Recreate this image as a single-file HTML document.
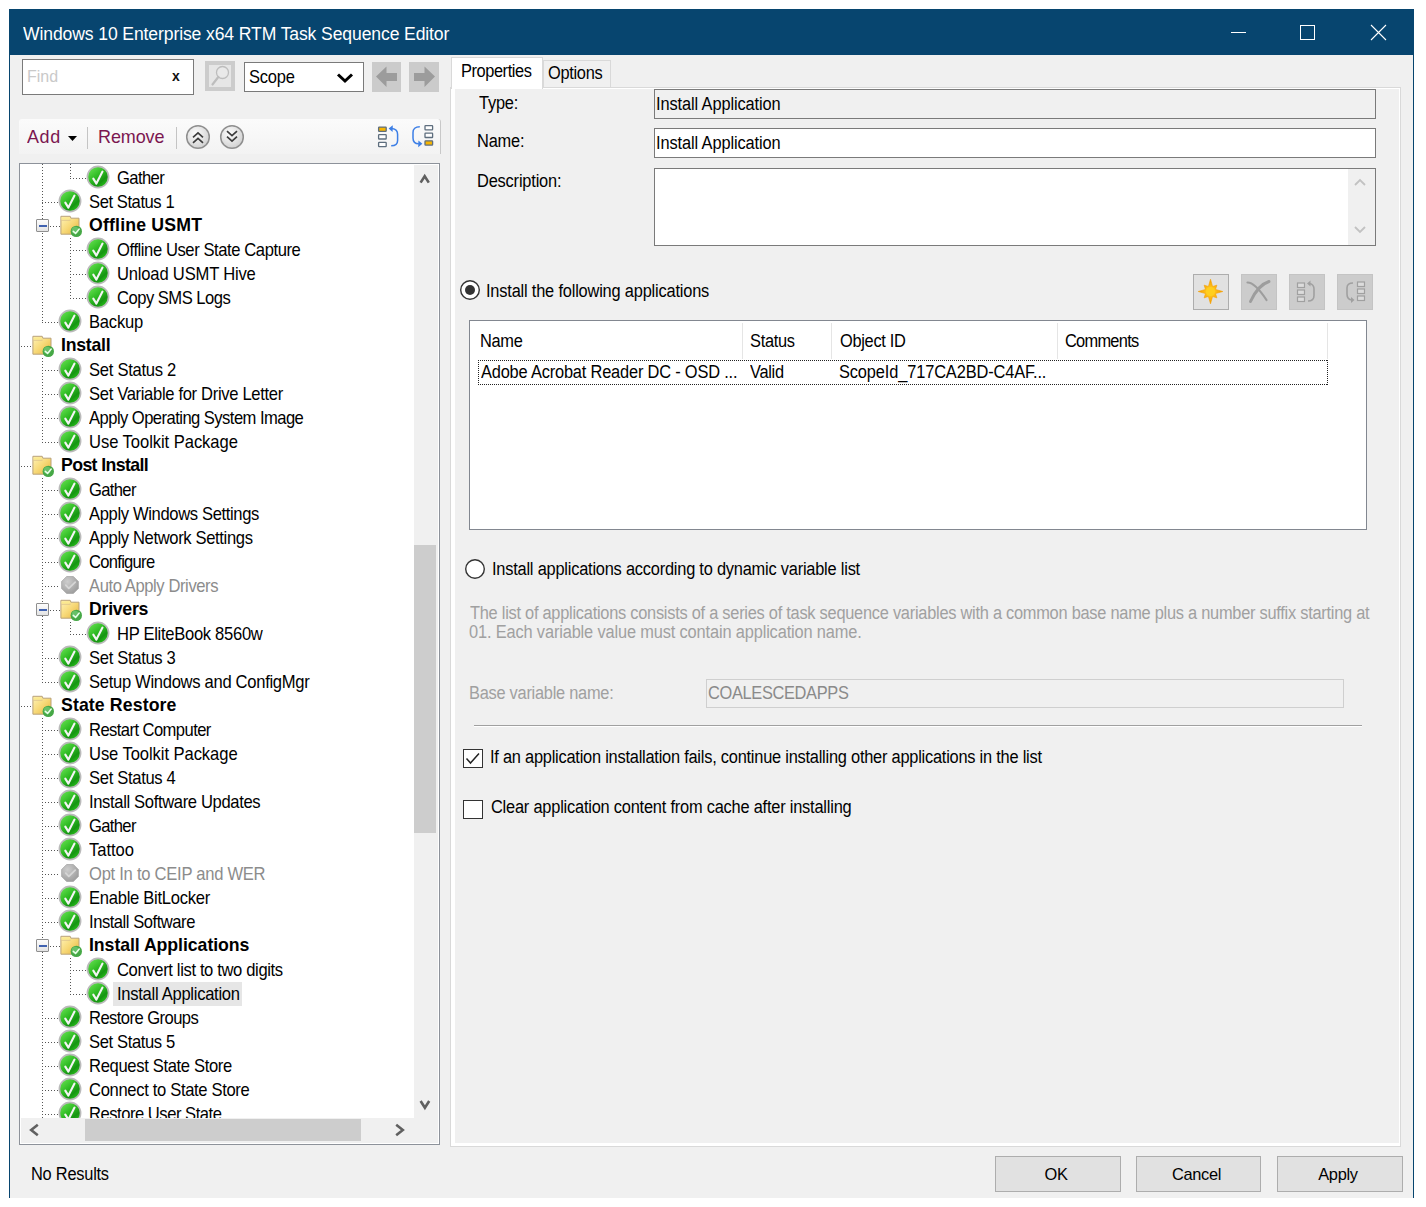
<!DOCTYPE html>
<html><head><meta charset="utf-8"><title>Task Sequence Editor</title>
<style>
html,body{margin:0;padding:0;}
body{width:1426px;height:1207px;position:relative;overflow:hidden;background:#fff;font-family:"Liberation Sans",sans-serif;}
.r{position:absolute;}
.t{position:absolute;white-space:nowrap;}
svg.r{overflow:visible;}
</style></head><body>
<svg width="0" height="0" style="position:absolute">
<defs>
<linearGradient id="gg" x1="0.15" y1="0.1" x2="0.85" y2="0.95">
<stop offset="0" stop-color="#60de4c"/><stop offset="0.45" stop-color="#2bb820"/><stop offset="0.72" stop-color="#169412"/><stop offset="1" stop-color="#2ccc1c"/>
</linearGradient>
<radialGradient id="gd" cx="35%" cy="30%" r="75%">
<stop offset="0" stop-color="#cdcdcd"/><stop offset="1" stop-color="#9d9d9d"/>
</radialGradient>
<linearGradient id="fy" x1="0" y1="0" x2="1" y2="1">
<stop offset="0" stop-color="#fff3b8"/><stop offset="0.5" stop-color="#f7d978"/><stop offset="1" stop-color="#e7b33c"/>
</linearGradient>
<symbol id="chk" viewBox="0 0 24 24">
<circle cx="12" cy="12" r="10.6" fill="url(#gg)" stroke="#bababa" stroke-width="1.7"/>
<path d="M7.3 13.6 L10.4 18.6 L16.5 6.6" fill="none" stroke="#f4f4f4" stroke-width="2.1" stroke-linecap="round" stroke-linejoin="round"/>
</symbol>
<symbol id="chkd" viewBox="0 0 24 24">
<path d="M8.6 3.5 H15.4 L20.4 8.5 V15.5 L15.4 20.5 H8.6 L3.6 15.5 V8.5 Z" fill="url(#gd)" stroke="#a9a9a9" stroke-width="0.8" stroke-linejoin="round"/>
<path d="M7.8 12.2 L10.8 15.4 L17.2 9.2" fill="none" stroke="#d6d6d6" stroke-width="1.8" stroke-linecap="round" stroke-linejoin="round"/>
</symbol>
<symbol id="fld" viewBox="0 0 24 24">
<path d="M0.9 1.3 H10.2 L10.9 3.2 H19 V19.2 H0.9 Z" fill="url(#fy)" stroke="#b9a27a" stroke-width="1"/>
<path d="M1.4 5.2 H10.5" stroke="#d9c089" stroke-width="0.9"/>
<path d="M1.5 2.5 H9.5 V4.6 H1.5 Z" fill="#fbe98e"/>
<circle cx="16.3" cy="16.4" r="5.7" fill="#46a846"/>
<circle cx="15.2" cy="15.2" r="3.5" fill="#7fd07f" opacity="0.6"/>
<path d="M13.3 16.4 L15.6 18.4 L19.2 14" fill="none" stroke="#eaffea" stroke-width="1.5" stroke-linecap="round"/>
</symbol>
</defs></svg>
<div class="r" style="left:9px;top:9px;width:1405px;height:1189px;background:#f0f0f0;"></div>
<div class="r" style="left:9px;top:9px;width:1405px;height:46px;background:#07456f;"></div>
<div class="r" style="left:9px;top:55px;width:1px;height:1143px;background:#07456f;"></div>
<div class="r" style="left:1413px;top:55px;width:1px;height:1143px;background:#07456f;"></div>
<div class="t" style="left:22.5px;top:21.52px;font-size:18.13px;line-height:25px;color:#fff;letter-spacing:-0.124px;transform:scaleX(0.9709);transform-origin:0 0;">Windows 10 Enterprise x64 RTM Task Sequence Editor</div>
<div class="r" style="left:1231px;top:32px;width:15px;height:1px;background:#fff;"></div>
<div class="r" style="left:1300px;top:25px;width:15px;height:15px;border:1px solid #fff;box-sizing:border-box;"></div>
<svg class="r" style="left:1370px;top:24px" width="17" height="17"><path d="M1 1L16 16M16 1L1 16" stroke="#fff" stroke-width="1.1"/></svg>
<div class="r" style="left:22px;top:59px;width:172px;height:36px;background:#fff;border:1px solid #7a7a7a;box-sizing:border-box;"></div>
<div class="t" style="left:27px;top:64.57px;font-size:17.12px;line-height:24px;color:#c9c9c9;transform:scaleX(0.9346);transform-origin:0 0;">Find</div>
<div class="t" style="left:172px;top:64.81px;font-size:14.98px;line-height:21px;color:#111;font-weight:bold;transform:scaleX(0.9346);transform-origin:0 0;">x</div>
<div class="r" style="left:205px;top:61px;width:30px;height:30px;background:#cccccc;"></div>
<div class="r" style="left:209px;top:65px;width:22px;height:22px;background:#e6e6e6;"></div>
<svg class="r" style="left:205px;top:61px" width="30" height="30"><circle cx="17.5" cy="11.5" r="6" fill="#e9e9e9" stroke="#bdbdbd" stroke-width="1.3"/><path d="M13.3 16 L7.5 23.5" stroke="#bdbdbd" stroke-width="2.2" stroke-linecap="round"/></svg>
<div class="r" style="left:244px;top:62px;width:120px;height:30px;background:#fff;border:1px solid #7a7a7a;box-sizing:border-box;"></div>
<div class="t" style="left:249px;top:65.38px;font-size:17.66px;line-height:25px;color:#000;letter-spacing:-0.214px;transform:scaleX(0.9346);transform-origin:0 0;">Scope</div>
<svg class="r" style="left:336px;top:72px" width="19" height="12"><path d="M2 2.5 L9 9 L16 2.5" fill="none" stroke="#000" stroke-width="3"/></svg>
<div class="r" style="left:372px;top:62px;width:29px;height:30px;background:#cbcbcb;"></div>
<div class="r" style="left:409px;top:62px;width:30px;height:30px;background:#cbcbcb;"></div>
<svg class="r" style="left:372px;top:62px" width="30" height="30"><path d="M4 14.5 L14.5 4.5 V11 H25 V19 H14.5 V25 Z" fill="#9c9c9c"/></svg>
<svg class="r" style="left:409px;top:62px" width="30" height="30"><path d="M26 14.5 L15.5 4.5 V11 H5 V19 H15.5 V25 Z" fill="#9c9c9c"/></svg>
<div class="r" style="left:19px;top:119px;width:422px;height:35px;background:linear-gradient(#fbfbfb,#f3f3f3);border-right:1px solid #c8c8c8;box-sizing:border-box;border-radius:3px 3px 0 0;"></div>
<div class="t" style="left:26.8px;top:123.13px;font-size:19.26px;line-height:27px;color:#7b1650;letter-spacing:0.642px;transform:scaleX(0.9346);transform-origin:0 0;">Add</div>
<svg class="r" style="left:67.5px;top:135.5px" width="10" height="6"><path d="M0 0 H9 L4.5 5 Z" fill="#000"/></svg>
<div class="r" style="left:87px;top:127px;width:1px;height:22px;background:#c4c4c4;"></div>
<div class="t" style="left:98.4px;top:123.13px;font-size:19.26px;line-height:27px;color:#7b1650;letter-spacing:-0.107px;transform:scaleX(0.9346);transform-origin:0 0;">Remove</div>
<div class="r" style="left:176px;top:127px;width:1px;height:22px;background:#c4c4c4;"></div>
<svg class="r" style="left:184.6px;top:124px" width="26" height="26"><defs><radialGradient id="cb197" cx="40%" cy="35%" r="70%"><stop offset="0" stop-color="#fdfdfd"/><stop offset="1" stop-color="#cfcfcf"/></radialGradient></defs><circle cx="13" cy="13" r="11.3" fill="url(#cb197)" stroke="#8f8f8f" stroke-width="1.5"/><g transform="translate(13 11.5)"><path d="M-5 1.8 L0 -2.6 L5 1.8 M-5 7.3 L0 2.9 L5 7.3" fill="none" stroke="#3c3c3c" stroke-width="1.7"/></g></svg>
<svg class="r" style="left:219px;top:124px" width="26" height="26"><defs><radialGradient id="cb232" cx="40%" cy="35%" r="70%"><stop offset="0" stop-color="#fdfdfd"/><stop offset="1" stop-color="#cfcfcf"/></radialGradient></defs><circle cx="13" cy="13" r="11.3" fill="url(#cb232)" stroke="#8f8f8f" stroke-width="1.5"/><g transform="translate(13 14.5)"><path d="M-5 -7.3 L0 -2.9 L5 -7.3 M-5 -1.8 L0 2.6 L5 -1.8" fill="none" stroke="#3c3c3c" stroke-width="1.7"/></g></svg>
<svg class="r" style="left:376px;top:124px" width="26" height="26">
<rect x="2.6" y="3.1" width="7.6" height="4.3" fill="#f7b500" stroke="#5e6e7e" stroke-width="1.3" rx="0.6"/>
<rect x="2.6" y="10.7" width="7.6" height="4.3" fill="#fff" stroke="#5e6e7e" stroke-width="1.3" rx="0.6"/>
<rect x="2.6" y="18.3" width="7.6" height="4.3" fill="#fff" stroke="#5e6e7e" stroke-width="1.3" rx="0.6"/>
<path d="M15.2 21.8 Q21.6 21.8 21.6 16.5 V10.5 Q21.6 5.2 16 4.6" fill="none" stroke="#3d7fe6" stroke-width="1.5"/>
<path d="M12.6 4.4 L16.8 1.2 L16.6 8 Z" fill="#3d7fe6"/>
</svg>
<svg class="r" style="left:410px;top:124px" width="26" height="26">
<rect x="15" y="1.6" width="7.6" height="4.3" fill="#fff" stroke="#5e6e7e" stroke-width="1.3" rx="0.6"/>
<rect x="15" y="9.2" width="7.6" height="4.3" fill="#fff" stroke="#5e6e7e" stroke-width="1.3" rx="0.6"/>
<rect x="15" y="16.8" width="7.6" height="4.3" fill="#f7b500" stroke="#5e6e7e" stroke-width="1.3" rx="0.6"/>
<path d="M9.8 2.8 Q3 2.8 3 8.5 V14 Q3 19.8 8.8 19.8" fill="none" stroke="#3d7fe6" stroke-width="1.5"/>
<path d="M12.4 19.8 L8.2 23.2 L8.4 16.4 Z" fill="#3d7fe6"/>
</svg>
<div class="r" style="left:19px;top:163px;width:421px;height:982px;background:#fff;border:1px solid #8d929a;box-sizing:border-box;"></div>
<div class="r" style="left:20px;top:164px;width:394px;height:954px;overflow:hidden;">
<div class="r" style="left:-20px;top:-164px;width:1426px;height:1300px;">
<div class="r" style="left:41.5px;top:164px;width:1px;height:158.5px;background:repeating-linear-gradient(180deg,#555555 0 1px,transparent 1px 3px);"></div>
<div class="r" style="left:41.5px;top:357.5px;width:1px;height:85.0px;background:repeating-linear-gradient(180deg,#555555 0 1px,transparent 1px 3px);"></div>
<div class="r" style="left:41.5px;top:477.5px;width:1px;height:205.0px;background:repeating-linear-gradient(180deg,#555555 0 1px,transparent 1px 3px);"></div>
<div class="r" style="left:41.5px;top:717.5px;width:1px;height:400.5px;background:repeating-linear-gradient(180deg,#555555 0 1px,transparent 1px 3px);"></div>
<div class="r" style="left:69.5px;top:164px;width:1px;height:14.5px;background:repeating-linear-gradient(180deg,#555555 0 1px,transparent 1px 3px);"></div>
<div class="r" style="left:69.5px;top:237.5px;width:1px;height:61.0px;background:repeating-linear-gradient(180deg,#555555 0 1px,transparent 1px 3px);"></div>
<div class="r" style="left:69.5px;top:621.5px;width:1px;height:13.0px;background:repeating-linear-gradient(180deg,#555555 0 1px,transparent 1px 3px);"></div>
<div class="r" style="left:69.5px;top:957.5px;width:1px;height:37.0px;background:repeating-linear-gradient(180deg,#555555 0 1px,transparent 1px 3px);"></div>
<div class="r" style="left:70px;top:178px;width:17.5px;height:1px;background:repeating-linear-gradient(90deg,#555555 0 1px,transparent 1px 3px);"></div>
<svg class="r" style="left:85.5px;top:165.0px" width="24" height="24"><use href="#chk"/></svg>
<div class="t" style="left:116.5px;top:166.05px;font-size:17.76px;line-height:25px;color:#000;letter-spacing:-0.631px;transform:scaleX(0.9346);transform-origin:0 0;">Gather</div>
<div class="r" style="left:42px;top:202px;width:17.5px;height:1px;background:repeating-linear-gradient(90deg,#555555 0 1px,transparent 1px 3px);"></div>
<svg class="r" style="left:57.5px;top:189.0px" width="24" height="24"><use href="#chk"/></svg>
<div class="t" style="left:88.5px;top:190.05px;font-size:17.76px;line-height:25px;color:#000;letter-spacing:-0.462px;transform:scaleX(0.9346);transform-origin:0 0;">Set Status 1</div>
<div class="r" style="left:50px;top:226px;width:10.5px;height:1px;background:repeating-linear-gradient(90deg,#555555 0 1px,transparent 1px 3px);"></div>
<svg class="r" style="left:59.5px;top:214.5px" width="24" height="24"><use href="#fld"/></svg>
<div class="r" style="left:36px;top:219.0px;width:13px;height:13.0px;background:linear-gradient(#fdfdfd,#e3e3e3);border:1px solid #8f8f8f;box-sizing:border-box;border-radius:1px;"></div>
<div class="r" style="left:38.5px;top:224.5px;width:8.0px;height:2.0px;background:#4062b0;"></div>
<div class="t" style="left:88.5px;top:211.34px;font-size:18.94px;line-height:27px;color:#000;font-weight:bold;letter-spacing:0.185px;transform:scaleX(0.9346);transform-origin:0 0;">Offline USMT</div>
<div class="r" style="left:70px;top:250px;width:17.5px;height:1px;background:repeating-linear-gradient(90deg,#555555 0 1px,transparent 1px 3px);"></div>
<svg class="r" style="left:85.5px;top:237.0px" width="24" height="24"><use href="#chk"/></svg>
<div class="t" style="left:116.5px;top:238.05px;font-size:17.76px;line-height:25px;color:#000;letter-spacing:-0.447px;transform:scaleX(0.9346);transform-origin:0 0;">Offline User State Capture</div>
<div class="r" style="left:70px;top:274px;width:17.5px;height:1px;background:repeating-linear-gradient(90deg,#555555 0 1px,transparent 1px 3px);"></div>
<svg class="r" style="left:85.5px;top:261.0px" width="24" height="24"><use href="#chk"/></svg>
<div class="t" style="left:116.5px;top:262.05px;font-size:17.76px;line-height:25px;color:#000;letter-spacing:-0.203px;transform:scaleX(0.9346);transform-origin:0 0;">Unload USMT Hive</div>
<div class="r" style="left:70px;top:298px;width:17.5px;height:1px;background:repeating-linear-gradient(90deg,#555555 0 1px,transparent 1px 3px);"></div>
<svg class="r" style="left:85.5px;top:285.0px" width="24" height="24"><use href="#chk"/></svg>
<div class="t" style="left:116.5px;top:286.05px;font-size:17.76px;line-height:25px;color:#000;letter-spacing:-0.544px;transform:scaleX(0.9346);transform-origin:0 0;">Copy SMS Logs</div>
<div class="r" style="left:42px;top:322px;width:17.5px;height:1px;background:repeating-linear-gradient(90deg,#555555 0 1px,transparent 1px 3px);"></div>
<svg class="r" style="left:57.5px;top:309.0px" width="24" height="24"><use href="#chk"/></svg>
<div class="t" style="left:88.5px;top:310.05px;font-size:17.76px;line-height:25px;color:#000;letter-spacing:-0.246px;transform:scaleX(0.9346);transform-origin:0 0;">Backup</div>
<div class="r" style="left:21px;top:346px;width:10.5px;height:1px;background:repeating-linear-gradient(90deg,#555555 0 1px,transparent 1px 3px);"></div>
<svg class="r" style="left:31.5px;top:334.5px" width="24" height="24"><use href="#fld"/></svg>
<div class="t" style="left:60.5px;top:331.34px;font-size:18.94px;line-height:27px;color:#000;font-weight:bold;letter-spacing:-0.268px;transform:scaleX(0.9346);transform-origin:0 0;">Install</div>
<div class="r" style="left:42px;top:370px;width:17.5px;height:1px;background:repeating-linear-gradient(90deg,#555555 0 1px,transparent 1px 3px);"></div>
<svg class="r" style="left:57.5px;top:357.0px" width="24" height="24"><use href="#chk"/></svg>
<div class="t" style="left:88.5px;top:358.05px;font-size:17.76px;line-height:25px;color:#000;letter-spacing:-0.297px;transform:scaleX(0.9346);transform-origin:0 0;">Set Status 2</div>
<div class="r" style="left:42px;top:394px;width:17.5px;height:1px;background:repeating-linear-gradient(90deg,#555555 0 1px,transparent 1px 3px);"></div>
<svg class="r" style="left:57.5px;top:381.0px" width="24" height="24"><use href="#chk"/></svg>
<div class="t" style="left:88.5px;top:382.05px;font-size:17.76px;line-height:25px;color:#000;letter-spacing:-0.355px;transform:scaleX(0.9346);transform-origin:0 0;">Set Variable for Drive Letter</div>
<div class="r" style="left:42px;top:418px;width:17.5px;height:1px;background:repeating-linear-gradient(90deg,#555555 0 1px,transparent 1px 3px);"></div>
<svg class="r" style="left:57.5px;top:405.0px" width="24" height="24"><use href="#chk"/></svg>
<div class="t" style="left:88.5px;top:406.05px;font-size:17.76px;line-height:25px;color:#000;letter-spacing:-0.585px;transform:scaleX(0.9346);transform-origin:0 0;">Apply Operating System Image</div>
<div class="r" style="left:42px;top:442px;width:17.5px;height:1px;background:repeating-linear-gradient(90deg,#555555 0 1px,transparent 1px 3px);"></div>
<svg class="r" style="left:57.5px;top:429.0px" width="24" height="24"><use href="#chk"/></svg>
<div class="t" style="left:88.5px;top:430.05px;font-size:17.76px;line-height:25px;color:#000;letter-spacing:-0.065px;transform:scaleX(0.9346);transform-origin:0 0;">Use Toolkit Package</div>
<div class="r" style="left:21px;top:466px;width:10.5px;height:1px;background:repeating-linear-gradient(90deg,#555555 0 1px,transparent 1px 3px);"></div>
<svg class="r" style="left:31.5px;top:454.5px" width="24" height="24"><use href="#fld"/></svg>
<div class="t" style="left:60.5px;top:451.34px;font-size:18.94px;line-height:27px;color:#000;font-weight:bold;letter-spacing:-0.661px;transform:scaleX(0.9346);transform-origin:0 0;">Post Install</div>
<div class="r" style="left:42px;top:490px;width:17.5px;height:1px;background:repeating-linear-gradient(90deg,#555555 0 1px,transparent 1px 3px);"></div>
<svg class="r" style="left:57.5px;top:477.0px" width="24" height="24"><use href="#chk"/></svg>
<div class="t" style="left:88.5px;top:478.05px;font-size:17.76px;line-height:25px;color:#000;letter-spacing:-0.695px;transform:scaleX(0.9346);transform-origin:0 0;">Gather</div>
<div class="r" style="left:42px;top:514px;width:17.5px;height:1px;background:repeating-linear-gradient(90deg,#555555 0 1px,transparent 1px 3px);"></div>
<svg class="r" style="left:57.5px;top:501.0px" width="24" height="24"><use href="#chk"/></svg>
<div class="t" style="left:88.5px;top:502.05px;font-size:17.76px;line-height:25px;color:#000;letter-spacing:-0.385px;transform:scaleX(0.9346);transform-origin:0 0;">Apply Windows Settings</div>
<div class="r" style="left:42px;top:538px;width:17.5px;height:1px;background:repeating-linear-gradient(90deg,#555555 0 1px,transparent 1px 3px);"></div>
<svg class="r" style="left:57.5px;top:525.0px" width="24" height="24"><use href="#chk"/></svg>
<div class="t" style="left:88.5px;top:526.05px;font-size:17.76px;line-height:25px;color:#000;letter-spacing:-0.385px;transform:scaleX(0.9346);transform-origin:0 0;">Apply Network Settings</div>
<div class="r" style="left:42px;top:562px;width:17.5px;height:1px;background:repeating-linear-gradient(90deg,#555555 0 1px,transparent 1px 3px);"></div>
<svg class="r" style="left:57.5px;top:549.0px" width="24" height="24"><use href="#chk"/></svg>
<div class="t" style="left:88.5px;top:550.05px;font-size:17.76px;line-height:25px;color:#000;letter-spacing:-0.776px;transform:scaleX(0.9346);transform-origin:0 0;">Configure</div>
<div class="r" style="left:42px;top:586px;width:17.5px;height:1px;background:repeating-linear-gradient(90deg,#555555 0 1px,transparent 1px 3px);"></div>
<svg class="r" style="left:57.5px;top:573.0px" width="24" height="24"><use href="#chkd"/></svg>
<div class="t" style="left:88.5px;top:574.05px;font-size:17.76px;line-height:25px;color:#8c8c8c;letter-spacing:-0.437px;transform:scaleX(0.9346);transform-origin:0 0;">Auto Apply Drivers</div>
<div class="r" style="left:50px;top:610px;width:10.5px;height:1px;background:repeating-linear-gradient(90deg,#555555 0 1px,transparent 1px 3px);"></div>
<svg class="r" style="left:59.5px;top:598.5px" width="24" height="24"><use href="#fld"/></svg>
<div class="r" style="left:36px;top:603.0px;width:13px;height:13.0px;background:linear-gradient(#fdfdfd,#e3e3e3);border:1px solid #8f8f8f;box-sizing:border-box;border-radius:1px;"></div>
<div class="r" style="left:38.5px;top:608.5px;width:8.0px;height:2.0px;background:#4062b0;"></div>
<div class="t" style="left:88.5px;top:595.34px;font-size:18.94px;line-height:27px;color:#000;font-weight:bold;letter-spacing:-0.285px;transform:scaleX(0.9346);transform-origin:0 0;">Drivers</div>
<div class="r" style="left:70px;top:634px;width:17.5px;height:1px;background:repeating-linear-gradient(90deg,#555555 0 1px,transparent 1px 3px);"></div>
<svg class="r" style="left:85.5px;top:621.0px" width="24" height="24"><use href="#chk"/></svg>
<div class="t" style="left:116.5px;top:622.05px;font-size:17.76px;line-height:25px;color:#000;letter-spacing:-0.324px;transform:scaleX(0.9346);transform-origin:0 0;">HP EliteBook 8560w</div>
<div class="r" style="left:42px;top:658px;width:17.5px;height:1px;background:repeating-linear-gradient(90deg,#555555 0 1px,transparent 1px 3px);"></div>
<svg class="r" style="left:57.5px;top:645.0px" width="24" height="24"><use href="#chk"/></svg>
<div class="t" style="left:88.5px;top:646.05px;font-size:17.76px;line-height:25px;color:#000;letter-spacing:-0.345px;transform:scaleX(0.9346);transform-origin:0 0;">Set Status 3</div>
<div class="r" style="left:42px;top:682px;width:17.5px;height:1px;background:repeating-linear-gradient(90deg,#555555 0 1px,transparent 1px 3px);"></div>
<svg class="r" style="left:57.5px;top:669.0px" width="24" height="24"><use href="#chk"/></svg>
<div class="t" style="left:88.5px;top:670.05px;font-size:17.76px;line-height:25px;color:#000;letter-spacing:-0.329px;transform:scaleX(0.9346);transform-origin:0 0;">Setup Windows and ConfigMgr</div>
<div class="r" style="left:21px;top:706px;width:10.5px;height:1px;background:repeating-linear-gradient(90deg,#555555 0 1px,transparent 1px 3px);"></div>
<svg class="r" style="left:31.5px;top:694.5px" width="24" height="24"><use href="#fld"/></svg>
<div class="t" style="left:60.5px;top:691.34px;font-size:18.94px;line-height:27px;color:#000;font-weight:bold;letter-spacing:0.116px;transform:scaleX(0.9346);transform-origin:0 0;">State Restore</div>
<div class="r" style="left:42px;top:730px;width:17.5px;height:1px;background:repeating-linear-gradient(90deg,#555555 0 1px,transparent 1px 3px);"></div>
<svg class="r" style="left:57.5px;top:717.0px" width="24" height="24"><use href="#chk"/></svg>
<div class="t" style="left:88.5px;top:718.05px;font-size:17.76px;line-height:25px;color:#000;letter-spacing:-0.610px;transform:scaleX(0.9346);transform-origin:0 0;">Restart Computer</div>
<div class="r" style="left:42px;top:754px;width:17.5px;height:1px;background:repeating-linear-gradient(90deg,#555555 0 1px,transparent 1px 3px);"></div>
<svg class="r" style="left:57.5px;top:741.0px" width="24" height="24"><use href="#chk"/></svg>
<div class="t" style="left:88.5px;top:742.05px;font-size:17.76px;line-height:25px;color:#000;letter-spacing:-0.083px;transform:scaleX(0.9346);transform-origin:0 0;">Use Toolkit Package</div>
<div class="r" style="left:42px;top:778px;width:17.5px;height:1px;background:repeating-linear-gradient(90deg,#555555 0 1px,transparent 1px 3px);"></div>
<svg class="r" style="left:57.5px;top:765.0px" width="24" height="24"><use href="#chk"/></svg>
<div class="t" style="left:88.5px;top:766.05px;font-size:17.76px;line-height:25px;color:#000;letter-spacing:-0.345px;transform:scaleX(0.9346);transform-origin:0 0;">Set Status 4</div>
<div class="r" style="left:42px;top:802px;width:17.5px;height:1px;background:repeating-linear-gradient(90deg,#555555 0 1px,transparent 1px 3px);"></div>
<svg class="r" style="left:57.5px;top:789.0px" width="24" height="24"><use href="#chk"/></svg>
<div class="t" style="left:88.5px;top:790.05px;font-size:17.76px;line-height:25px;color:#000;letter-spacing:-0.384px;transform:scaleX(0.9346);transform-origin:0 0;">Install Software Updates</div>
<div class="r" style="left:42px;top:826px;width:17.5px;height:1px;background:repeating-linear-gradient(90deg,#555555 0 1px,transparent 1px 3px);"></div>
<svg class="r" style="left:57.5px;top:813.0px" width="24" height="24"><use href="#chk"/></svg>
<div class="t" style="left:88.5px;top:814.05px;font-size:17.76px;line-height:25px;color:#000;letter-spacing:-0.695px;transform:scaleX(0.9346);transform-origin:0 0;">Gather</div>
<div class="r" style="left:42px;top:850px;width:17.5px;height:1px;background:repeating-linear-gradient(90deg,#555555 0 1px,transparent 1px 3px);"></div>
<svg class="r" style="left:57.5px;top:837.0px" width="24" height="24"><use href="#chk"/></svg>
<div class="t" style="left:88.5px;top:838.05px;font-size:17.76px;line-height:25px;color:#000;letter-spacing:-0.053px;transform:scaleX(0.9346);transform-origin:0 0;">Tattoo</div>
<div class="r" style="left:42px;top:874px;width:17.5px;height:1px;background:repeating-linear-gradient(90deg,#555555 0 1px,transparent 1px 3px);"></div>
<svg class="r" style="left:57.5px;top:861.0px" width="24" height="24"><use href="#chkd"/></svg>
<div class="t" style="left:88.5px;top:862.05px;font-size:17.76px;line-height:25px;color:#8c8c8c;letter-spacing:-0.288px;transform:scaleX(0.9346);transform-origin:0 0;">Opt In to CEIP and WER</div>
<div class="r" style="left:42px;top:898px;width:17.5px;height:1px;background:repeating-linear-gradient(90deg,#555555 0 1px,transparent 1px 3px);"></div>
<svg class="r" style="left:57.5px;top:885.0px" width="24" height="24"><use href="#chk"/></svg>
<div class="t" style="left:88.5px;top:886.05px;font-size:17.76px;line-height:25px;color:#000;letter-spacing:-0.296px;transform:scaleX(0.9346);transform-origin:0 0;">Enable BitLocker</div>
<div class="r" style="left:42px;top:922px;width:17.5px;height:1px;background:repeating-linear-gradient(90deg,#555555 0 1px,transparent 1px 3px);"></div>
<svg class="r" style="left:57.5px;top:909.0px" width="24" height="24"><use href="#chk"/></svg>
<div class="t" style="left:88.5px;top:910.05px;font-size:17.76px;line-height:25px;color:#000;letter-spacing:-0.503px;transform:scaleX(0.9346);transform-origin:0 0;">Install Software</div>
<div class="r" style="left:50px;top:946px;width:10.5px;height:1px;background:repeating-linear-gradient(90deg,#555555 0 1px,transparent 1px 3px);"></div>
<svg class="r" style="left:59.5px;top:934.5px" width="24" height="24"><use href="#fld"/></svg>
<div class="r" style="left:36px;top:939.0px;width:13px;height:13.0px;background:linear-gradient(#fdfdfd,#e3e3e3);border:1px solid #8f8f8f;box-sizing:border-box;border-radius:1px;"></div>
<div class="r" style="left:38.5px;top:944.5px;width:8.0px;height:2.0px;background:#4062b0;"></div>
<div class="t" style="left:88.5px;top:931.34px;font-size:18.94px;line-height:27px;color:#000;font-weight:bold;letter-spacing:-0.068px;transform:scaleX(0.9346);transform-origin:0 0;">Install Applications</div>
<div class="r" style="left:70px;top:970px;width:17.5px;height:1px;background:repeating-linear-gradient(90deg,#555555 0 1px,transparent 1px 3px);"></div>
<svg class="r" style="left:85.5px;top:957.0px" width="24" height="24"><use href="#chk"/></svg>
<div class="t" style="left:116.5px;top:958.05px;font-size:17.76px;line-height:25px;color:#000;letter-spacing:-0.387px;transform:scaleX(0.9346);transform-origin:0 0;">Convert list to two digits</div>
<div class="r" style="left:70px;top:994px;width:17.5px;height:1px;background:repeating-linear-gradient(90deg,#555555 0 1px,transparent 1px 3px);"></div>
<svg class="r" style="left:85.5px;top:981.0px" width="24" height="24"><use href="#chk"/></svg>
<div class="r" style="left:112.5px;top:981.5px;width:129.0px;height:24.0px;background:#e6e6e6;"></div>
<div class="t" style="left:116.5px;top:982.05px;font-size:17.76px;line-height:25px;color:#000;letter-spacing:-0.309px;transform:scaleX(0.9346);transform-origin:0 0;">Install Application</div>
<div class="r" style="left:42px;top:1018px;width:17.5px;height:1px;background:repeating-linear-gradient(90deg,#555555 0 1px,transparent 1px 3px);"></div>
<svg class="r" style="left:57.5px;top:1005.0px" width="24" height="24"><use href="#chk"/></svg>
<div class="t" style="left:88.5px;top:1006.05px;font-size:17.76px;line-height:25px;color:#000;letter-spacing:-0.605px;transform:scaleX(0.9346);transform-origin:0 0;">Restore Groups</div>
<div class="r" style="left:42px;top:1042px;width:17.5px;height:1px;background:repeating-linear-gradient(90deg,#555555 0 1px,transparent 1px 3px);"></div>
<svg class="r" style="left:57.5px;top:1029.0px" width="24" height="24"><use href="#chk"/></svg>
<div class="t" style="left:88.5px;top:1030.05px;font-size:17.76px;line-height:25px;color:#000;letter-spacing:-0.404px;transform:scaleX(0.9346);transform-origin:0 0;">Set Status 5</div>
<div class="r" style="left:42px;top:1066px;width:17.5px;height:1px;background:repeating-linear-gradient(90deg,#555555 0 1px,transparent 1px 3px);"></div>
<svg class="r" style="left:57.5px;top:1053.0px" width="24" height="24"><use href="#chk"/></svg>
<div class="t" style="left:88.5px;top:1054.05px;font-size:17.76px;line-height:25px;color:#000;letter-spacing:-0.363px;transform:scaleX(0.9346);transform-origin:0 0;">Request State Store</div>
<div class="r" style="left:42px;top:1090px;width:17.5px;height:1px;background:repeating-linear-gradient(90deg,#555555 0 1px,transparent 1px 3px);"></div>
<svg class="r" style="left:57.5px;top:1077.0px" width="24" height="24"><use href="#chk"/></svg>
<div class="t" style="left:88.5px;top:1078.05px;font-size:17.76px;line-height:25px;color:#000;letter-spacing:-0.359px;transform:scaleX(0.9346);transform-origin:0 0;">Connect to State Store</div>
<div class="r" style="left:42px;top:1114px;width:17.5px;height:1px;background:repeating-linear-gradient(90deg,#555555 0 1px,transparent 1px 3px);"></div>
<svg class="r" style="left:57.5px;top:1101.0px" width="24" height="24"><use href="#chk"/></svg>
<div class="t" style="left:88.5px;top:1102.05px;font-size:17.76px;line-height:25px;color:#000;letter-spacing:-0.513px;transform:scaleX(0.9346);transform-origin:0 0;">Restore User State</div>
</div></div>
<div class="r" style="left:414px;top:165px;width:24px;height:978px;background:#f0f0f0;"></div>
<div class="r" style="left:414px;top:545px;width:22px;height:288px;background:#cdcdcd;"></div>
<svg class="r" style="left:418px;top:172px" width="14" height="14"><path d="M2.6 10.6 L6.7 4.2 L10.8 10.6" fill="none" stroke="#606060" stroke-width="2.6"/></svg>
<svg class="r" style="left:418px;top:1098px" width="14" height="14"><path d="M2.6 3 L6.9 9.8 L11.2 3" fill="none" stroke="#606060" stroke-width="2.6"/></svg>
<div class="r" style="left:21px;top:1118px;width:417px;height:25px;background:#f0f0f0;"></div>
<div class="r" style="left:85px;top:1119px;width:276px;height:22px;background:#cdcdcd;"></div>
<svg class="r" style="left:27px;top:1122px" width="14" height="16"><path d="M10.8 2.8 L4.2 8 L10.8 13.2" fill="none" stroke="#606060" stroke-width="2.6"/></svg>
<svg class="r" style="left:393px;top:1122px" width="14" height="16"><path d="M3.2 2.8 L9.8 8 L3.2 13.2" fill="none" stroke="#606060" stroke-width="2.6"/></svg>
<div class="r" style="left:450px;top:87px;width:951px;height:1060px;background:#fff;border:1px solid #d9d9d9;box-sizing:border-box;"></div>
<div class="r" style="left:455px;top:89px;width:944px;height:1054px;background:#f0f0f0;"></div>
<div class="r" style="left:451px;top:57px;width:92px;height:32px;background:#fff;border:1px solid #d9d9d9;border-bottom:none;box-sizing:border-box;"></div>
<div class="r" style="left:543px;top:60px;width:68px;height:27px;background:#f0f0f0;border:1px solid #d9d9d9;border-bottom:none;box-sizing:border-box;"></div>
<div class="t" style="left:461px;top:58.62px;font-size:17.55px;line-height:25px;color:#000;letter-spacing:-0.449px;transform:scaleX(0.9346);transform-origin:0 0;">Properties</div>
<div class="t" style="left:548.4px;top:61.42px;font-size:17.55px;line-height:25px;color:#000;letter-spacing:-0.321px;transform:scaleX(0.9346);transform-origin:0 0;">Options</div>
<div class="t" style="left:478.6px;top:90.52px;font-size:17.55px;line-height:25px;color:#000;letter-spacing:-0.214px;transform:scaleX(0.9346);transform-origin:0 0;">Type:</div>
<div class="t" style="left:477.4px;top:128.72px;font-size:17.55px;line-height:25px;color:#000;letter-spacing:-0.214px;transform:scaleX(0.9346);transform-origin:0 0;">Name:</div>
<div class="t" style="left:477.4px;top:168.82px;font-size:17.55px;line-height:25px;color:#000;letter-spacing:-0.193px;transform:scaleX(0.9346);transform-origin:0 0;">Description:</div>
<div class="r" style="left:654px;top:89px;width:722px;height:30px;background:#f0f0f0;border:1px solid #7a7a7a;box-sizing:border-box;"></div>
<div class="t" style="left:656.2px;top:91.92px;font-size:17.55px;line-height:25px;color:#000;letter-spacing:-0.118px;transform:scaleX(0.9346);transform-origin:0 0;">Install Application</div>
<div class="r" style="left:654px;top:128px;width:722px;height:30px;background:#fff;border:1px solid #7a7a7a;box-sizing:border-box;"></div>
<div class="t" style="left:656.2px;top:130.92px;font-size:17.55px;line-height:25px;color:#000;letter-spacing:-0.118px;transform:scaleX(0.9346);transform-origin:0 0;">Install Application</div>
<div class="r" style="left:654px;top:168px;width:722px;height:78px;background:#fff;border:1px solid #7a7a7a;box-sizing:border-box;"></div>
<div class="r" style="left:1348px;top:169px;width:27px;height:76px;background:#f0f0f0;"></div>
<svg class="r" style="left:1352px;top:176px" width="16" height="12"><path d="M3 9 L8 4 L13 9" fill="none" stroke="#c2c2c2" stroke-width="1.8"/></svg>
<svg class="r" style="left:1352px;top:224px" width="16" height="12"><path d="M3 3 L8 8 L13 3" fill="none" stroke="#c2c2c2" stroke-width="1.8"/></svg>
<svg class="r" style="left:459px;top:279px" width="22" height="22"><circle cx="11" cy="11" r="9.3" fill="#fff" stroke="#333" stroke-width="1.4"/><circle cx="11" cy="11" r="5" fill="#333"/></svg>
<div class="t" style="left:486px;top:279.12px;font-size:17.55px;line-height:25px;color:#000;letter-spacing:-0.203px;transform:scaleX(0.9346);transform-origin:0 0;">Install the following applications</div>
<div class="r" style="left:1193px;top:274px;width:36px;height:36px;background:#e1e1e1;border:1px solid #adadad;box-sizing:border-box;"></div>
<svg class="r" style="left:1193px;top:274px" width="36" height="36">
<defs><radialGradient id="stg" cx="50%" cy="50%" r="50%"><stop offset="0" stop-color="#ffe14a"/><stop offset="0.35" stop-color="#ffc21a"/><stop offset="1" stop-color="#f29a00"/></radialGradient></defs>
<polygon points="17.50,5.20 19.57,12.51 23.86,11.14 22.49,15.43 29.80,17.50 22.49,19.57 23.86,23.86 19.57,22.49 17.50,29.80 15.43,22.49 11.14,23.86 12.51,19.57 5.20,17.50 12.51,15.43 11.14,11.14 15.43,12.51" fill="url(#stg)" stroke="#f5a000" stroke-width="0.6" stroke-linejoin="round"/>
<circle cx="17.5" cy="17.5" r="4.6" fill="#ffcf1f"/>
</svg>
<div class="r" style="left:1241px;top:274px;width:36px;height:36px;background:#cccccc;border:1px solid #c4c4c4;box-sizing:border-box;"></div>
<div class="r" style="left:1289px;top:274px;width:36px;height:36px;background:#cccccc;border:1px solid #c4c4c4;box-sizing:border-box;"></div>
<div class="r" style="left:1337px;top:274px;width:36px;height:36px;background:#cccccc;border:1px solid #c4c4c4;box-sizing:border-box;"></div>
<svg class="r" style="left:1241px;top:274px" width="36" height="36"><path d="M6.5 8.5 Q14 8.5 25.5 26" fill="none" stroke="#9d9d9d" stroke-width="2.2" stroke-linecap="round"/><path d="M28 7.5 Q17 11 9.5 27.5" fill="none" stroke="#9d9d9d" stroke-width="3" stroke-linecap="round"/></svg>
<svg class="r" style="left:1289px;top:274px" width="36" height="36">
<rect x="8.5" y="9" width="7" height="4.5" fill="#dcdcdc" stroke="#a0a0a0" stroke-width="1.2"/>
<rect x="8.5" y="16" width="7" height="4.5" fill="#dcdcdc" stroke="#a0a0a0" stroke-width="1.2"/>
<rect x="8.5" y="23" width="7" height="4.5" fill="#dcdcdc" stroke="#a0a0a0" stroke-width="1.2"/>
<path d="M19 27 Q25 27 25 21.5 V15 Q25 10.5 20.5 9.5" fill="none" stroke="#a0a0a0" stroke-width="1.6"/>
<path d="M18 9.5 L21.5 6.5 L21.5 12.5 Z" fill="#a0a0a0"/></svg>
<svg class="r" style="left:1337px;top:274px" width="36" height="36">
<rect x="20.5" y="8" width="7" height="4.5" fill="#dcdcdc" stroke="#a0a0a0" stroke-width="1.2"/>
<rect x="20.5" y="15" width="7" height="4.5" fill="#dcdcdc" stroke="#a0a0a0" stroke-width="1.2"/>
<rect x="20.5" y="22" width="7" height="4.5" fill="#dcdcdc" stroke="#a0a0a0" stroke-width="1.2"/>
<path d="M16 9 Q10 9 10 14 V20 Q10 25.5 15 26" fill="none" stroke="#a0a0a0" stroke-width="1.6"/>
<path d="M17.5 26 L14 29 L14 23 Z" fill="#a0a0a0"/></svg>
<div class="r" style="left:469px;top:320px;width:898px;height:210px;background:#fff;border:1px solid #828790;box-sizing:border-box;"></div>
<div class="r" style="left:742px;top:323px;width:1px;height:36px;background:#e5e5e5;"></div>
<div class="r" style="left:831px;top:323px;width:1px;height:36px;background:#e5e5e5;"></div>
<div class="r" style="left:1057px;top:323px;width:1px;height:36px;background:#e5e5e5;"></div>
<div class="r" style="left:1327px;top:323px;width:1px;height:36px;background:#e5e5e5;"></div>
<div class="t" style="left:480.4px;top:328.72px;font-size:17.55px;line-height:25px;color:#000;letter-spacing:-0.321px;transform:scaleX(0.9346);transform-origin:0 0;">Name</div>
<div class="t" style="left:750.4px;top:328.72px;font-size:17.55px;line-height:25px;color:#000;letter-spacing:-0.321px;transform:scaleX(0.9346);transform-origin:0 0;">Status</div>
<div class="t" style="left:839.5px;top:328.72px;font-size:17.55px;line-height:25px;color:#000;letter-spacing:-0.321px;transform:scaleX(0.9346);transform-origin:0 0;">Object ID</div>
<div class="t" style="left:1064.6px;top:328.72px;font-size:17.55px;line-height:25px;color:#000;letter-spacing:-0.770px;transform:scaleX(0.9346);transform-origin:0 0;">Comments</div>
<div class="r" style="left:478px;top:360px;width:850px;height:25px;background:repeating-linear-gradient(90deg,#222 0 1px,transparent 1px 2px) top/100% 1px no-repeat,repeating-linear-gradient(90deg,#222 0 1px,transparent 1px 2px) bottom/100% 1px no-repeat,repeating-linear-gradient(180deg,#222 0 1px,transparent 1px 2px) left/1px 100% no-repeat,repeating-linear-gradient(180deg,#222 0 1px,transparent 1px 2px) right/1px 100% no-repeat;"></div>
<div class="t" style="left:481.2px;top:360.22px;font-size:17.55px;line-height:25px;color:#000;letter-spacing:-0.193px;transform:scaleX(0.9346);transform-origin:0 0;">Adobe Acrobat Reader DC - OSD ...</div>
<div class="t" style="left:750.4px;top:360.22px;font-size:17.55px;line-height:25px;color:#000;letter-spacing:-0.321px;transform:scaleX(0.9346);transform-origin:0 0;">Valid</div>
<div class="t" style="left:839.4px;top:360.22px;font-size:17.55px;line-height:25px;color:#000;letter-spacing:-0.139px;transform:scaleX(0.9346);transform-origin:0 0;">ScopeId_717CA2BD-C4AF...</div>
<svg class="r" style="left:464px;top:558px" width="22" height="22"><circle cx="11" cy="11" r="9.3" fill="#fff" stroke="#333" stroke-width="1.4"/></svg>
<div class="t" style="left:491.6px;top:556.92px;font-size:17.55px;line-height:25px;color:#000;letter-spacing:-0.230px;transform:scaleX(0.9346);transform-origin:0 0;">Install applications according to dynamic variable list</div>
<div class="t" style="left:469.6px;top:600.82px;font-size:17.55px;line-height:25px;color:#a0a0a0;letter-spacing:-0.273px;transform:scaleX(0.9346);transform-origin:0 0;">The list of applications consists of a series of task sequence variables with a common base name plus a number suffix starting at</div>
<div class="t" style="left:468.6px;top:620.12px;font-size:17.55px;line-height:25px;color:#a0a0a0;letter-spacing:-0.161px;transform:scaleX(0.9346);transform-origin:0 0;">01. Each variable value must contain application name.</div>
<div class="t" style="left:468.6px;top:681.42px;font-size:17.55px;line-height:25px;color:#a0a0a0;letter-spacing:-0.278px;transform:scaleX(0.9346);transform-origin:0 0;">Base variable name:</div>
<div class="r" style="left:706px;top:679px;width:638px;height:29px;background:#f0f0f0;border:1px solid #cfcfcf;box-sizing:border-box;"></div>
<div class="t" style="left:708px;top:681.42px;font-size:17.55px;line-height:25px;color:#8a8a8a;letter-spacing:-0.353px;transform:scaleX(0.9346);transform-origin:0 0;">COALESCEDAPPS</div>
<div class="r" style="left:474px;top:725px;width:888px;height:1px;background:#a0a0a0;"></div>
<div class="r" style="left:474px;top:726px;width:888px;height:1px;background:#fff;"></div>
<div class="r" style="left:463px;top:749px;width:20px;height:19px;background:#fff;border:1px solid #333;box-sizing:border-box;"></div>
<svg class="r" style="left:463px;top:749px" width="20" height="19"><path d="M3.5 9.5 L7.5 14 L16 4.5" fill="none" stroke="#222" stroke-width="1.5"/></svg>
<div class="t" style="left:490px;top:744.52px;font-size:17.55px;line-height:25px;color:#000;letter-spacing:-0.246px;transform:scaleX(0.9346);transform-origin:0 0;">If an application installation fails, continue installing other applications in the list</div>
<div class="r" style="left:463px;top:800px;width:20px;height:19px;background:#fff;border:1px solid #333;box-sizing:border-box;"></div>
<div class="t" style="left:490.8px;top:795.42px;font-size:17.55px;line-height:25px;color:#000;letter-spacing:-0.225px;transform:scaleX(0.9346);transform-origin:0 0;">Clear application content from cache after installing</div>
<div class="t" style="left:31.2px;top:1161.92px;font-size:17.55px;line-height:25px;color:#000;letter-spacing:-0.246px;transform:scaleX(0.9346);transform-origin:0 0;">No Results</div>
<div class="r" style="left:995px;top:1156px;width:126px;height:36px;background:#e1e1e1;border:1px solid #adadad;box-sizing:border-box;"></div>
<div class="t" style="left:993px;width:126px;text-align:center;top:1162.62px;font-size:16.4px;line-height:23px;letter-spacing:-0.3px;color:#000">OK</div>
<div class="r" style="left:1136px;top:1156px;width:125px;height:36px;background:#e1e1e1;border:1px solid #adadad;box-sizing:border-box;"></div>
<div class="t" style="left:1134px;width:125px;text-align:center;top:1162.62px;font-size:16.4px;line-height:23px;letter-spacing:-0.3px;color:#000">Cancel</div>
<div class="r" style="left:1277px;top:1156px;width:126px;height:36px;background:#e1e1e1;border:1px solid #adadad;box-sizing:border-box;"></div>
<div class="t" style="left:1275px;width:126px;text-align:center;top:1162.62px;font-size:16.4px;line-height:23px;letter-spacing:-0.3px;color:#000">Apply</div>
</body></html>
